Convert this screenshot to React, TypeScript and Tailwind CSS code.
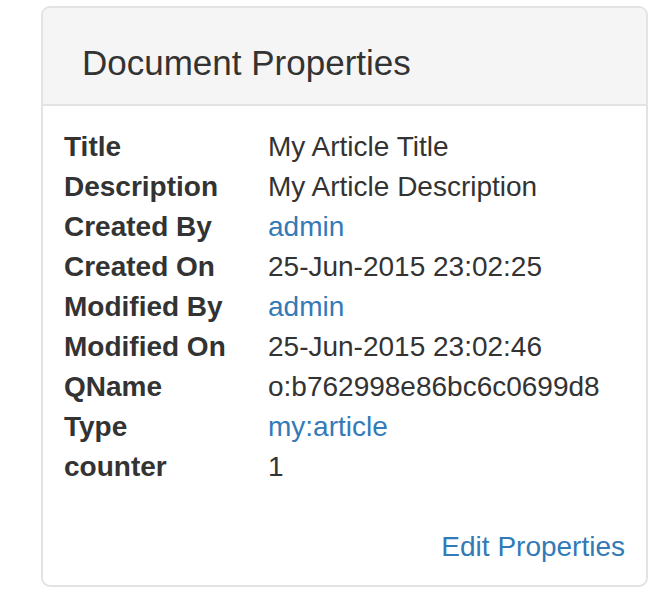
import React from "react";

const rows: { label: string; value: string; link?: boolean }[] = [
  { label: "Title", value: "My Article Title" },
  { label: "Description", value: "My Article Description" },
  { label: "Created By", value: "admin", link: true },
  { label: "Created On", value: "25-Jun-2015 23:02:25" },
  { label: "Modified By", value: "admin", link: true },
  { label: "Modified On", value: "25-Jun-2015 23:02:46" },
  { label: "QName", value: "o:b762998e86bc6c0699d8" },
  { label: "Type", value: "my:article", link: true },
  { label: "counter", value: "1" },
];

export default function App() {
  return (
    <div className="min-h-[600px] bg-white pt-[6px] pl-[41px] font-['Liberation_Sans',Arial,sans-serif] text-[#333]">
      <div className="w-[607px] h-[581px] rounded-[9px] border-2 border-[#e3e3e3] bg-white overflow-hidden flex flex-col">
        <div className="h-[98px] bg-[#f5f5f5] border-b-2 border-[#e3e3e3] pl-[39px] flex items-center">
          <h3 className="text-[35px] leading-none text-[#333] pt-[12px]">Document Properties</h3>
        </div>
        <div className="pt-[21px] pl-[21px] pr-[20px] flex flex-col">
          <dl className="flex flex-col">
            {rows.map((r) => (
              <div key={r.label} className="flex h-[40px] items-center">
                <dt className="w-[204px] font-bold text-[28px]">{r.label}</dt>
                <dd className={"text-[28px] " + (r.link ? "text-[#337ab7]" : "text-[#333]")}>{r.value}</dd>
              </div>
            ))}
          </dl>
          <div className="flex justify-end mt-[40px] h-[40px] items-center">
            <a className="text-[28px] text-[#337ab7] mr-[1px]">Edit Properties</a>
          </div>
        </div>
      </div>
    </div>
  );
}
